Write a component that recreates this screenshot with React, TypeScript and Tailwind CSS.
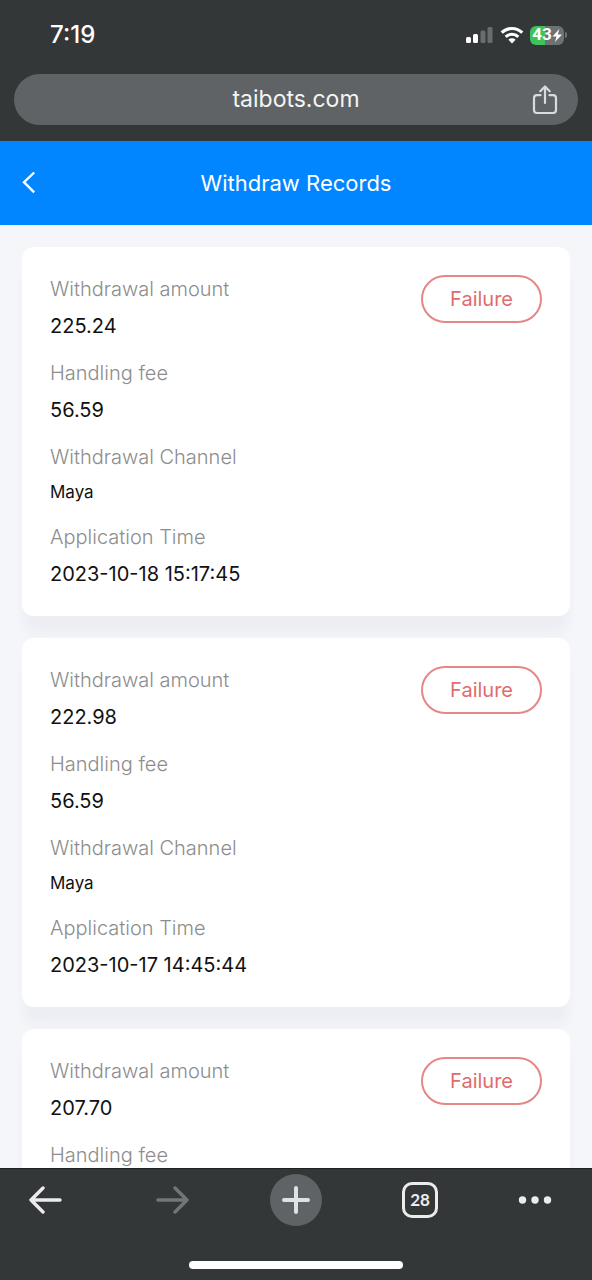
type WithdrawRecord = {
  amount: string;
  fee: string;
  channel: string;
  time: string;
  status: string;
};

const records: WithdrawRecord[] = [
  {
    amount: "225.24",
    fee: "56.59",
    channel: "Maya",
    time: "2023-10-18 15:17:45",
    status: "Failure",
  },
  {
    amount: "222.98",
    fee: "56.59",
    channel: "Maya",
    time: "2023-10-17 14:45:44",
    status: "Failure",
  },
  {
    amount: "207.70",
    fee: "56.59",
    channel: "Maya",
    time: "2023-10-16 15:02:31",
    status: "Failure",
  },
];

function SignalIcon() {
  return (
    <svg width="28" height="18" viewBox="0 0 28 18" aria-hidden="true">
      <rect x="0" y="11" width="5" height="6" rx="1.5" fill="#fff" />
      <rect x="7" y="8" width="5" height="9" rx="1.5" fill="#fff" />
      <rect x="14.5" y="4.5" width="5" height="12.5" rx="1.5" fill="#6a6d6e" />
      <rect x="21.5" y="1" width="5" height="16" rx="1.5" fill="#6a6d6e" />
    </svg>
  );
}

function WifiIcon() {
  return (
    <svg width="24" height="18" viewBox="0 0 24 18" aria-hidden="true">
      <g fill="none" stroke="#fff" strokeWidth="3.1">
        <path d="M1.7 6.7a14.6 14.6 0 0 1 20.6 0" />
        <path d="M5.7 10.9a8.9 8.9 0 0 1 12.6 0" />
      </g>
      <path d="M8.4 13.7a5.1 5.1 0 0 1 7.2 0L12 17.5z" fill="#fff" />
    </svg>
  );
}

function Battery() {
  return (
    <div className="flex items-center gap-px" aria-label="Battery 43%">
      <div className="flex h-[19px] w-[34px] items-center justify-center rounded-md bg-linear-to-r from-[#3fc25c] from-45% to-[#6f7273] to-45%">
        <span className="font-['Roboto',sans-serif] text-[17px] font-bold text-white">
          43
        </span>
        <svg width="10" height="13" viewBox="0 0 10 13" aria-hidden="true">
          <path d="M7.300 0 0.500 7.400h4L3 13l7-7.500H5.800z" fill="#fff" />
        </svg>
      </div>
      <span className="h-1.5 w-0.5 rounded-r-full bg-[#6f7273]" />
    </div>
  );
}

function ShareIcon() {
  return (
    <svg
      width="26"
      height="30"
      viewBox="0 0 26 30"
      fill="none"
      stroke="#d9dbdd"
      strokeWidth="2.2"
      strokeLinecap="round"
      strokeLinejoin="round"
      aria-hidden="true"
    >
      <path d="M8.5 10.2H5a3 3 0 0 0-3 3V25a3 3 0 0 0 3 3h16a3 3 0 0 0 3-3V13.2a3 3 0 0 0-3-3h-3.5" />
      <path d="M13 18V2M8.3 6.2 13 1.5l4.7 4.7" />
    </svg>
  );
}

function ArrowIcon({ d, color }: { d: string; color: string }) {
  return (
    <svg
      width="34"
      height="28"
      viewBox="0 0 34 28"
      fill="none"
      stroke={color}
      strokeWidth="3.4"
      strokeLinecap="round"
      strokeLinejoin="round"
      aria-hidden="true"
    >
      <path d={d} />
    </svg>
  );
}

function BrowserTop() {
  return (
    <header className="shrink-0 bg-[#343737] px-3.5 pb-4">
      <div className="flex h-[74px] items-center justify-between pr-[11px] pb-1 pl-9">
        <span className="text-2xl font-medium text-white">7:19</span>
        <div className="flex items-center gap-1.5">
          <SignalIcon />
          <WifiIcon />
          <Battery />
        </div>
      </div>
      <div className="grid h-[51px] grid-cols-[1fr_auto_1fr] items-center rounded-full bg-[#5f6366] px-5">
        <span className="col-start-2 text-[23px] text-[#f4f5f5]">
          taibots.com
        </span>
        <button type="button" aria-label="Share" className="justify-self-end">
          <ShareIcon />
        </button>
      </div>
    </header>
  );
}

function PageTitle() {
  return (
    <div className="grid h-[84px] shrink-0 grid-cols-[1fr_auto_1fr] items-center bg-[#0186ff] px-5 text-white">
      <button type="button" aria-label="Back" className="justify-self-start">
        <svg
          width="18"
          height="24"
          viewBox="0 0 18 24"
          fill="none"
          stroke="currentColor"
          strokeWidth="2.4"
          aria-hidden="true"
        >
          <path d="M14.2 1.5 4 11.2l10.200 10.200" />
        </svg>
      </button>
      <h1 className="text-[22px]">Withdraw Records</h1>
    </div>
  );
}

function Field({
  label,
  value,
  small,
}: {
  label: string;
  value: string;
  small?: boolean;
}) {
  return (
    <div>
      <dt className="text-xl leading-7 font-light text-[#8d8d8d]">{label}</dt>
      <dd
        className={
          small
            ? "mt-[9px] text-[17px] leading-6 text-[#111]"
            : "mt-[9px] text-xl leading-7 text-[#111]"
        }
      >
        {value}
      </dd>
    </div>
  );
}

function RecordCard({ record }: { record: WithdrawRecord }) {
  return (
    <li className="flex items-start justify-between rounded-xl bg-white p-7 shadow-[0_20px_12px_-2px_rgba(40,50,70,0.04)]">
      <dl className="flex flex-col gap-[19px]">
        <Field label="Withdrawal amount" value={record.amount} />
        <Field label="Handling fee" value={record.fee} />
        <Field label="Withdrawal Channel" value={record.channel} small />
        <Field label="Application Time" value={record.time} />
      </dl>
      <span className="flex h-12 items-center rounded-full border-2 border-[#e68686] px-[27px] text-xl text-[#e06c6c]">
        {record.status}
      </span>
    </li>
  );
}

function BrowserBottom() {
  return (
    <footer className="shrink-0 border-t border-[#1f2121] bg-[#343737] pb-[11px]">
      <nav className="flex items-center justify-between pt-[5px] pr-10 pl-7">
        <button type="button" aria-label="Back" className="w-12">
          <ArrowIcon d="M15 2 3 14l12 12M3 14h29" color="#ececec" />
        </button>
        <button type="button" aria-label="Forward" disabled>
          <ArrowIcon d="m19 2 12 12-12 12M31 14H2" color="#737677" />
        </button>
        <button
          type="button"
          aria-label="New tab"
          className="flex size-[52px] items-center justify-center rounded-full bg-[#5f6366]"
        >
          <svg width="28" height="28" viewBox="0 0 28 28" aria-hidden="true">
            <path
              d="M14 2v24M2 14h24"
              stroke="#dfe1e2"
              strokeWidth="4"
              strokeLinecap="round"
            />
          </svg>
        </button>
        <button
          type="button"
          aria-label="Tabs"
          className="flex size-9 items-center justify-center rounded-[10px] border-3 border-[#ececec] font-['Lato',sans-serif] text-[17px] font-bold text-[#ececec]"
        >
          28
        </button>
        <button type="button" aria-label="More">
          <svg width="34" height="8" viewBox="0 0 34 8" fill="#ececec">
            <circle cx="4.5" cy="4" r="3.7" />
            <circle cx="17" cy="4" r="3.7" />
            <circle cx="29.5" cy="4" r="3.7" />
          </svg>
        </button>
      </nav>
      <div className="mx-auto mt-[35px] h-2 w-[36%] rounded-full bg-white" />
    </footer>
  );
}

export default function App() {
  return (
    <div className="flex h-screen flex-col bg-[#f5f6fa] font-['Inter',sans-serif]">
      <BrowserTop />
      <PageTitle />
      <main className="min-h-0 flex-1 overflow-y-auto px-[22px] pt-[22px] [scrollbar-width:none]">
        <ul className="flex flex-col gap-[22px]">
          {records.map((record) => (
            <RecordCard key={record.time} record={record} />
          ))}
        </ul>
      </main>
      <BrowserBottom />
    </div>
  );
}
